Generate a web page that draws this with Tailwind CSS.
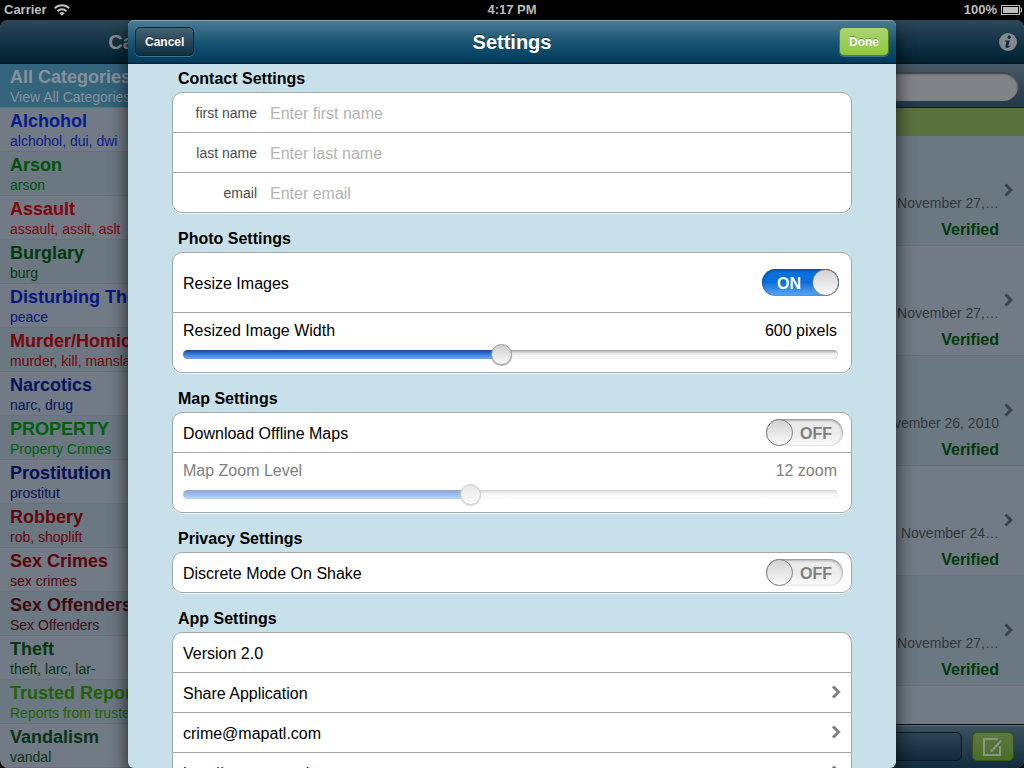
<!DOCTYPE html>
<html lang="en">
<head>
<meta charset="utf-8">
<meta name="viewport" content="width=device-width, initial-scale=1">
<title>Settings</title>
<script src="https://cdn.jsdelivr.net/npm/@tailwindcss/browser@4"></script>
</head>
<body class="flex h-screen flex-col overflow-hidden bg-black font-['Liberation_Sans',Arial,sans-serif] text-base text-black">

<!-- Status bar -->
<header class="grid h-5 shrink-0 grid-cols-3 items-center px-1 text-[13px] font-bold text-[#bfbfbf]">
  <div class="flex items-center gap-[7px]">
    <span>Carrier</span>
    <svg class="h-3 w-4" viewBox="0 0 16 12" fill="none" stroke="#bfbfbf" stroke-width="2" aria-label="Wi-Fi">
      <path d="M.8 4.200a10.200 10.200 0 0 1 14.400 0"/><path d="M3.500 7.200a6.400 6.400 0 0 1 9 0"/><path d="M8 11.800 5.400 9.200a3.700 3.700 0 0 1 5.200 0z" fill="#bfbfbf" stroke="none"/>
    </svg>
  </div>
  <div class="text-center">4:17 PM</div>
  <div class="flex items-center justify-end gap-1">
    <span>100%</span>
    <svg class="-mr-0.5 h-[10px] w-[21px]" viewBox="0 0 21 10" aria-label="Battery full">
      <rect x=".5" y=".5" width="18" height="9" fill="none" stroke="#bfbfbf"/><rect x="2" y="2" width="15" height="6" fill="#bfbfbf"/><path d="M19 3h1.500v4H19" fill="none" stroke="#bfbfbf"/>
    </svg>
  </div>
</header>

<div class="relative flex min-h-0 flex-1 gap-px">

  <!-- Category list -->
  <aside class="flex w-80 shrink-0 flex-col overflow-hidden rounded-lg bg-[#717a85]">
    <div class="flex h-11 shrink-0 items-center justify-center border-b border-[#00101a] bg-linear-to-b from-[#2c4757] via-[#133447] to-[#00202f] text-xl font-bold text-[#868b90]">Categories</div>
    <nav class="[&_a]:flex [&_a]:h-11 [&_a]:flex-col [&_a]:border-b [&_a]:border-[#6b6e77] [&_a]:px-2.5 [&_a]:pt-0.5 [&_a]:text-sm [&_a]:leading-[18px] [&_a]:whitespace-nowrap [&_a:nth-child(odd)]:bg-[#6b7781] [&_b]:text-lg [&_b]:leading-[22px]">
      <a href="#" class="bg-[#34637c]! text-[#86929a]"><b>All Categories</b>View All Categories</a>
      <a href="#" class="text-[#0a1a8c]"><b>Alchohol</b>alchohol, dui, dwi</a>
      <a href="#" class="text-[#00520c]"><b>Arson</b>arson</a>
      <a href="#" class="text-[#80060c]"><b>Assault</b>assault, asslt, aslt</a>
      <a href="#" class="text-[#003b0c]"><b>Burglary</b>burg</a>
      <a href="#" class="text-[#06167e]"><b>Disturbing The Peace</b>peace</a>
      <a href="#" class="text-[#78060c]"><b>Murder/Homicide</b>murder, kill, manslaughter</a>
      <a href="#" class="text-[#06125e]"><b>Narcotics</b>narc, drug</a>
      <a href="#" class="text-[#00600c]"><b>PROPERTY</b>Property Crimes</a>
      <a href="#" class="text-[#060f52]"><b>Prostitution</b>prostitut</a>
      <a href="#" class="text-[#66060c]"><b>Robbery</b>rob, shoplift</a>
      <a href="#" class="text-[#5a060c]"><b>Sex Crimes</b>sex crimes</a>
      <a href="#" class="text-[#400a10]"><b>Sex Offenders</b>Sex Offenders</a>
      <a href="#" class="text-[#07370f]"><b>Theft</b>theft, larc, lar-</a>
      <a href="#" class="text-[#246006]"><b>Trusted Reports</b>Reports from trusted sources</a>
      <a href="#" class="text-[#0a3314]"><b>Vandalism</b>vandal</a>
    </nav>
  </aside>

  <!-- Report list -->
  <main class="flex min-w-0 flex-1 flex-col overflow-hidden rounded-lg bg-[#717a85]">
    <div class="flex h-11 shrink-0 items-center justify-end border-b border-[#00101a] bg-linear-to-b from-[#2c4757] via-[#133447] to-[#00202f] px-[7px]">
      <button type="button" aria-label="Information">
        <svg class="size-[18px]" viewBox="0 0 18 18"><circle cx="9" cy="9" r="9" fill="#84898d"/><circle cx="10.200" cy="4.200" r="1.700" fill="#0c2c3d"/><path d="M5.800 7.400h5L9.200 13c-.1.7.5.6 1.900-.7l.5.5c-2.500 3-5.700 2.700-5.200.2l1.200-4.400H5.800z" fill="#0c2c3d"/></svg>
      </button>
    </div>
    <div class="h-11 shrink-0 border-b border-[#0c1c28] bg-linear-to-b from-[#485a66] to-[#203848] px-1.5 pt-2">
      <input type="search" aria-label="Search reports" class="h-[29px] w-full rounded-full bg-[#818285] px-4 shadow-[inset_0_2px_2px_#3a4047] outline-none">
    </div>
    <div class="h-7 shrink-0 bg-[#5a713f]"></div>
    <ul class="min-h-0 flex-1 overflow-hidden [&>li]:flex [&>li]:h-[110px] [&>li]:items-center [&>li]:justify-end [&>li]:gap-1 [&>li]:border-b [&>li]:border-[#6b6e77] [&>li]:pr-[11px] [&>li:nth-child(odd)]:bg-[#6b7781] [&_div]:pt-[51px] [&_div]:text-right [&_p]:mb-px [&_p]:text-sm [&_p]:leading-[26px] [&_p]:text-[#32373d] [&_strong]:block [&_strong]:leading-[26px] [&_strong]:text-[#003a0a] [&_svg]:mb-0.5 [&_svg]:h-3.5 [&_svg]:w-2.5">
      <li><div><p>Saturday, November 27,…</p><strong>Verified</strong></div><svg viewBox="0 0 10 14" fill="none" stroke="#3b4249" stroke-width="3"><path d="m2.500 1.500 5.500 5.500-5.500 5.500"/></svg></li>
      <li><div><p>Saturday, November 27,…</p><strong>Verified</strong></div><svg viewBox="0 0 10 14" fill="none" stroke="#3b4249" stroke-width="3"><path d="m2.500 1.500 5.500 5.500-5.500 5.500"/></svg></li>
      <li><div><p>Friday, November 26, 2010</p><strong>Verified</strong></div><svg viewBox="0 0 10 14" fill="none" stroke="#3b4249" stroke-width="3"><path d="m2.500 1.500 5.500 5.500-5.500 5.500"/></svg></li>
      <li><div><p>Wednesday, November 24…</p><strong>Verified</strong></div><svg viewBox="0 0 10 14" fill="none" stroke="#3b4249" stroke-width="3"><path d="m2.500 1.500 5.500 5.500-5.500 5.500"/></svg></li>
      <li><div><p>Saturday, November 27,…</p><strong>Verified</strong></div><svg viewBox="0 0 10 14" fill="none" stroke="#3b4249" stroke-width="3"><path d="m2.500 1.500 5.500 5.500-5.500 5.500"/></svg></li>
    </ul>
    <footer class="flex h-11 shrink-0 items-center gap-2.5 border-t border-[#05080a] bg-linear-to-b from-[#3d525f] to-[#132c3d] px-2.5 shadow-[inset_0_1px_0_#5b6d78]">
      <button type="button" aria-label="Filter" class="h-[29px] flex-1 rounded-[5px] border border-[#0b1a26] bg-linear-to-b from-[#2f4353] to-[#12283c]"></button>
      <button type="button" aria-label="New report" class="flex h-[29px] w-[42px] items-center justify-center rounded-[5px] border border-[#37501c] bg-linear-to-b from-[#5d7842] to-[#496f22]">
        <svg class="h-5 w-[22px]" viewBox="0 0 22 20" fill="none" stroke="#8b928b" stroke-width="2"><path d="M16 2H2v16h16v-9"/><path d="m9.500 12 9-10 2.200 2-9 10z" fill="#8b928b" stroke="#4f7030" stroke-width="1"/><path d="m8 15.500 1.200-3.800 2.600 2.400z" fill="#8b928b" stroke="none"/></svg>
      </button>
    </footer>
  </main>

  <!-- Settings dialog -->
  <div role="dialog" aria-labelledby="dialog-title" class="absolute inset-0 mx-auto flex w-full max-w-3xl flex-col overflow-hidden rounded-md bg-[#c8e0ea] shadow-[0_8px_18px_rgba(0,0,0,0.75)]">
    <div class="grid h-11 shrink-0 grid-cols-[1fr_auto_1fr] items-center border-b border-[#001a2b] bg-linear-to-b from-[#4c7c95] via-[#185674] via-50% to-[#003a5a] px-[7px] text-white shadow-[inset_0_1px_0_#86a5b5]">
      <button type="button" class="h-[29px] justify-self-start rounded-[5px] border border-[#0b2735] bg-linear-to-b from-[#456273] to-[#0c3043] px-[9px] text-xs font-bold shadow-[0_1px_0_rgba(255,255,255,0.25)] [text-shadow:0_-1px_0_rgba(0,0,0,0.5)]">Cancel</button>
      <h1 id="dialog-title" class="text-xl font-bold [text-shadow:0_-1px_0_rgba(0,0,0,0.5)]">Settings</h1>
      <button type="button" class="h-[29px] justify-self-end rounded-[5px] border border-[#4f7d2c] bg-linear-to-b from-[#abd46f] to-[#8cc83c] px-[9px] text-xs font-bold shadow-[0_1px_0_rgba(255,255,255,0.25)] [text-shadow:0_-1px_0_rgba(0,0,0,0.3)]">Done</button>
    </div>

    <form class="flex min-h-0 flex-1 flex-col gap-[11px] overflow-hidden px-11 [&_h2]:h-7 [&_h2]:px-1.5 [&_h2]:leading-[30px] [&_h2]:font-bold [&>section]:shrink-0 [&>section>div]:overflow-hidden [&>section>div]:rounded-[10px] [&>section>div]:border [&>section>div]:border-[#a6a9ab] [&>section>div]:bg-white [&>section>div]:shadow-[0_1px_0_#eef6f9] [&>section>div]:divide-y [&>section>div]:divide-[#a6a9ab]">

      <section>
        <h2>Contact Settings</h2>
        <div>
          <div class="box-content flex h-[39px] items-center gap-[13px]"><label for="first" class="w-[84px] text-right text-sm text-[#4c4c4c]">first name</label><input id="first" type="text" placeholder="Enter first name" class="flex-1 pt-0.5 outline-none placeholder:text-[#b3b3b3]"></div>
          <div class="box-content flex h-[39px] items-center gap-[13px]"><label for="last" class="w-[84px] text-right text-sm text-[#4c4c4c]">last name</label><input id="last" type="text" placeholder="Enter last name" class="flex-1 pt-0.5 outline-none placeholder:text-[#b3b3b3]"></div>
          <div class="box-content flex h-[39px] items-center gap-[13px]"><label for="email" class="w-[84px] text-right text-sm text-[#4c4c4c]">email</label><input id="email" type="email" placeholder="Enter email" class="flex-1 pt-0.5 outline-none placeholder:text-[#b3b3b3]"></div>
        </div>
      </section>

      <section>
        <h2>Photo Settings</h2>
        <div>
          <label class="box-content flex h-[59px] items-center justify-between pr-3 pl-2.5">
            <span class="pt-0.5">Resize Images</span>
            <span class="relative flex h-[27px] w-[77px] items-center justify-between rounded-full bg-linear-to-b from-[#0670dc] from-50% to-[#58a8f4] shadow-[inset_0_1px_3px_#0a3c86]">
              <input type="checkbox" role="switch" checked class="absolute inset-0 appearance-none rounded-full">
              <span class="pt-0.5 pl-[15px] font-bold text-white">ON</span>
              <span class="size-[27px] rounded-full border border-[#808080] bg-linear-to-b from-[#d2d2d2] to-[#fafafa]"></span>
            </span>
          </label>
          <div class="box-content flex h-[59px] flex-col gap-[7px] pr-3.5 pl-2.5">
            <div class="flex h-[30px] items-end justify-between"><label for="width">Resized Image Width</label><output for="width">600 pixels</output></div>
            <input id="width" type="range" min="0" max="1000" value="486" style="--fill:49%" class="-mr-px block h-[9px] shrink-0 appearance-none rounded-full bg-[linear-gradient(#164398,#3c7cdf_50%,#6cabfa),linear-gradient(#a3a3a3,#ececec_40%,#ffffff)] bg-[length:var(--fill)_100%,100%_100%] bg-no-repeat shadow-[inset_0_0_1px_#777] [&::-webkit-slider-thumb]:size-[21px] [&::-webkit-slider-thumb]:appearance-none [&::-webkit-slider-thumb]:rounded-full [&::-webkit-slider-thumb]:border [&::-webkit-slider-thumb]:border-[#9a9a9a] [&::-webkit-slider-thumb]:bg-linear-to-b [&::-webkit-slider-thumb]:from-[#cfcfcf] [&::-webkit-slider-thumb]:to-[#fafafa] [&::-webkit-slider-thumb]:shadow-[0_1px_1px_#aaa]">
          </div>
        </div>
      </section>

      <section>
        <h2>Map Settings</h2>
        <div>
          <label class="box-content flex h-[39px] items-center justify-between pr-2 pl-2.5">
            <span class="pt-0.5">Download Offline Maps</span>
            <span class="relative flex h-[27px] w-[77px] items-center justify-between rounded-full bg-linear-to-b from-[#ebebeb] from-50% to-[#fcfcfc] shadow-[inset_0_1px_3px_#777]">
              <input type="checkbox" role="switch" class="absolute inset-0 appearance-none rounded-full">
              <span class="size-[27px] rounded-full border border-[#808080] bg-linear-to-b from-[#d2d2d2] to-[#fafafa]"></span>
              <span class="pt-0.5 pr-[11px] font-bold text-[#808080]">OFF</span>
            </span>
          </label>
          <div class="box-content flex h-[59px] flex-col gap-[7px] pr-3.5 pl-2.5 text-[#808080]">
            <div class="flex h-[30px] items-end justify-between"><label for="zoom">Map Zoom Level</label><output for="zoom">12 zoom</output></div>
            <input id="zoom" type="range" min="0" max="1000" value="437" disabled style="--fill:44%" class="-mr-px block h-[9px] shrink-0 appearance-none rounded-full bg-[linear-gradient(#8ba6d2,#9dbef0_50%,#b8d6fe),linear-gradient(#d2d2d2,#f4f4f4_40%,#ffffff)] bg-[length:var(--fill)_100%,100%_100%] bg-no-repeat shadow-[inset_0_0_1px_#bbb] [&::-webkit-slider-thumb]:size-[21px] [&::-webkit-slider-thumb]:appearance-none [&::-webkit-slider-thumb]:rounded-full [&::-webkit-slider-thumb]:border [&::-webkit-slider-thumb]:border-[#cccccc] [&::-webkit-slider-thumb]:bg-linear-to-b [&::-webkit-slider-thumb]:from-[#e6e6e6] [&::-webkit-slider-thumb]:to-[#fcfcfc] [&::-webkit-slider-thumb]:shadow-[0_1px_1px_#d5d5d5]">
          </div>
        </div>
      </section>

      <section>
        <h2>Privacy Settings</h2>
        <div>
          <label class="box-content flex h-[39px] items-center justify-between pr-2 pl-2.5">
            <span class="pt-0.5">Discrete Mode On Shake</span>
            <span class="relative flex h-[27px] w-[77px] items-center justify-between rounded-full bg-linear-to-b from-[#ebebeb] from-50% to-[#fcfcfc] shadow-[inset_0_1px_3px_#777]">
              <input type="checkbox" role="switch" class="absolute inset-0 appearance-none rounded-full">
              <span class="size-[27px] rounded-full border border-[#808080] bg-linear-to-b from-[#d2d2d2] to-[#fafafa]"></span>
              <span class="pt-0.5 pr-[11px] font-bold text-[#808080]">OFF</span>
            </span>
          </label>
        </div>
      </section>

      <section>
        <h2>App Settings</h2>
        <div class="[&_span]:pt-0.5 [&_svg]:mb-0.5">
          <div class="box-content flex h-[39px] items-center px-2.5"><span>Version 2.0</span></div>
          <a href="#" class="box-content flex h-[39px] items-center justify-between px-2.5"><span>Share Application</span><svg class="h-3.5 w-2.5" viewBox="0 0 10 14" fill="none" stroke="#808080" stroke-width="3"><path d="m2 1.500 5.500 5.500L2 12.500"/></svg></a>
          <a href="#" class="box-content flex h-[39px] items-center justify-between px-2.5"><span>crime@mapatl.com</span><svg class="h-3.5 w-2.5" viewBox="0 0 10 14" fill="none" stroke="#808080" stroke-width="3"><path d="m2 1.500 5.500 5.500L2 12.500"/></svg></a>
          <a href="#" class="box-content flex h-[39px] items-center justify-between px-2.5"><span>http://www.mapatl.com</span><svg class="h-3.5 w-2.5" viewBox="0 0 10 14" fill="none" stroke="#808080" stroke-width="3"><path d="m2 1.500 5.500 5.500L2 12.500"/></svg></a>
        </div>
      </section>
    </form>
  </div>
</div>
</body>
</html>
